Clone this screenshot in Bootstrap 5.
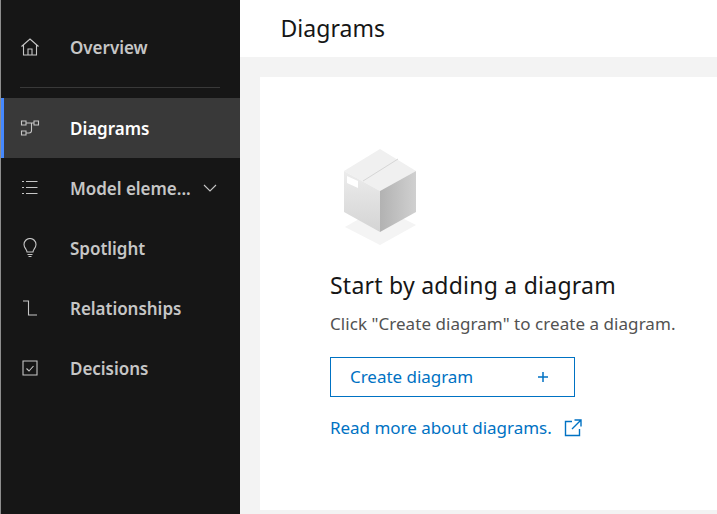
<!DOCTYPE html>
<html lang="en">
<head>
<meta charset="utf-8">
<title>Diagrams</title>
<link href="https://cdn.jsdelivr.net/npm/bootstrap@5.3.0/dist/css/bootstrap.min.css" rel="stylesheet">
<style>
html,body{height:100%;overflow:hidden}
body{font-family:"Noto Sans","Liberation Sans",sans-serif;background:#f3f3f3;color:#161616}
.shell{height:514px}
.side{width:240px;background:#161616;border-left:1px solid #8d8d8d;padding-top:17px;flex:none}
.side-row{height:60px;color:#c6c6c6;font-size:17px;font-weight:600;border-left:3px solid transparent;text-decoration:none}
.side-row.on{background:#393939;color:#fff;border-left-color:#4589ff}
.side-ico{width:20px;height:20px;margin-left:16px;margin-right:30px;flex:none;fill:none;stroke:#c6c6c6;stroke-width:1.1}
.side-label{width:121px;white-space:nowrap;letter-spacing:-.03px;padding-top:1px}
.chev{width:16px;height:16px;margin-left:11px;fill:none;stroke:#c6c6c6;stroke-width:1.1}
.side-rule{height:1px;background:#393939;margin:10px 20px 10px 19px}
.main{min-width:0}
.topbar{height:57px;background:#fff;padding-left:40.500px;font-size:23px;line-height:57px;font-weight:400;letter-spacing:.03px}
.pane{background:#fff;margin:20px 0 4px 20px;padding:70px 0 0 70px}
.box-art{width:88px;height:98px;display:block}
.pane-title{font-size:23px;font-weight:400;line-height:30px;margin:25px 0 0;letter-spacing:.24px}
.pane-text{font-size:17px;color:#525252;line-height:22px;margin:13px 0 0;letter-spacing:.05px}
.create{width:245px;height:40px;border:1px solid #0072c3;border-radius:0;color:#0072c3;font-size:17px;padding:0 23px 0 19px;margin-top:22px;letter-spacing:-.03px}
.create svg{width:16px;height:16px;stroke:#0072c3;fill:none;stroke-width:1.5}
.more{color:#0072c3;font-size:17px;text-decoration:none;margin-top:18px;letter-spacing:-.03px}
.more svg{width:18px;height:18px;margin-left:12px;stroke:#0072c3;fill:none;stroke-width:1.4}
</style>
</head>
<body>
<div class="shell d-flex">
  <nav class="side d-flex flex-column">
    <a class="side-row d-flex align-items-center" href="#">
      <svg class="side-ico" viewBox="0 0 20 20"><path d="M1.500 9.500 10 2l8.500 7.500M3.500 8v10h13V8M8 18v-6h4v6"/></svg>
      <span class="side-label">Overview</span>
    </a>
    <div class="side-rule"></div>
    <a class="side-row on d-flex align-items-center" href="#">
      <svg class="side-ico" viewBox="0 0 20 20"><path d="M1.500 3h4.500v4h-4.500zM14 3h4.500v4H14zM1.500 13h4.500v4h-4.500zM6 5h8M11.500 5v7.500a2.500 2.500 0 0 1-2.500 2.500H6"/></svg>
      <span class="side-label">Diagrams</span>
    </a>
    <a class="side-row d-flex align-items-center" href="#">
      <svg class="side-ico" viewBox="0 0 20 20"><path d="M6 3.500h11.500M6 9.500h11.500M6 15.500h11.500M2 3.500h2M2 9.500h2M2 15.500h2"/></svg>
      <span class="side-label">Model eleme...</span>
      <svg class="chev" viewBox="0 0 16 16"><path d="M2 5l6 6 6-6"/></svg>
    </a>
    <a class="side-row d-flex align-items-center" href="#">
      <svg class="side-ico" viewBox="0 0 20 20"><path d="M7 14c0-2.500-3-4-3-7.500a6 6 0 0 1 12 0c0 3.500-3 5-3 7.500zM7.500 16.500h5M8.500 18.500h3"/></svg>
      <span class="side-label">Spotlight</span>
    </a>
    <a class="side-row d-flex align-items-center" href="#">
      <svg class="side-ico" viewBox="0 0 20 20"><path d="M3 3h5.500v14H17"/></svg>
      <span class="side-label">Relationships</span>
    </a>
    <a class="side-row d-flex align-items-center" href="#">
      <svg class="side-ico" viewBox="0 0 20 20"><path d="M3 3h14v14H3zM6.500 10.500l2.500 2.500 4.500-5"/></svg>
      <span class="side-label">Decisions</span>
    </a>
  </nav>
  <main class="main flex-grow-1 d-flex flex-column">
    <div class="topbar">Diagrams</div>
    <section class="pane flex-grow-1">
      <svg class="box-art" viewBox="0 0 88 98">
        <defs>
          <linearGradient id="lf" x1="0" y1="0" x2="0" y2="1"><stop offset="0" stop-color="#ececec"/><stop offset="1" stop-color="#d4d4d4"/></linearGradient>
          <linearGradient id="rf" x1="0" y1="0" x2="1" y2="0"><stop offset="0" stop-color="#b2b2b2"/><stop offset="1" stop-color="#d0d0d0"/></linearGradient>
        </defs>
        <path d="M50 60 86 78 50 98 15 80z" fill="#f4f4f4"/>
        <path d="M14 24 50 2l36 22-36 20z" fill="#f0f0f0"/>
        <path d="M14 24 50 44v41L14 65z" fill="url(#lf)"/>
        <path d="M50 44 86 24v41L50 85z" fill="url(#rf)"/>
        <path d="M33 34 68 12" stroke="#d6d6d6" fill="none"/>
        <path d="M17 29l11 5v7l-11-5z" fill="#fff"/>
      </svg>
      <h2 class="pane-title">Start by adding a diagram</h2>
      <p class="pane-text">Click "Create diagram" to create a diagram.</p>
      <a class="create btn d-flex align-items-center justify-content-between" href="#">Create diagram
        <svg viewBox="0 0 16 16"><path d="M8 3v10M3 8h10"/></svg>
      </a>
      <a class="more d-inline-flex align-items-center" href="#">Read more about diagrams.
        <svg viewBox="0 0 18 18"><path d="M8 2.500H1.500v14h14V10M10.500 1h6.500v6.500M17 1 8 10"/></svg>
      </a>
    </section>
  </main>
</div>
<script src="https://cdn.jsdelivr.net/npm/bootstrap@5.3.0/dist/js/bootstrap.bundle.min.js"></script>
</body>
</html>
